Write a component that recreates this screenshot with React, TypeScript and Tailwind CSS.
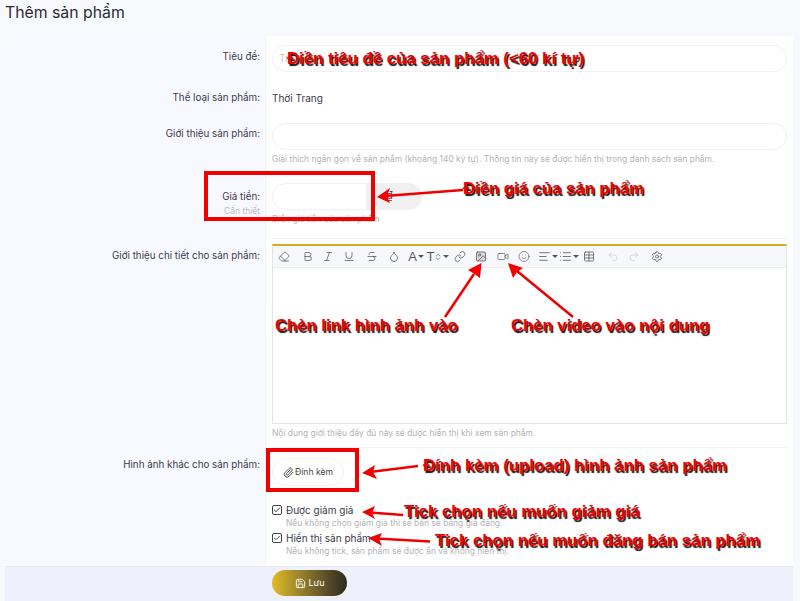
import React from "react";
import { Eraser, Bold, Italic, Underline, Strikethrough, Droplet, Link, Image, Video, Smile, AlignLeft, List, Table, Undo2, Redo2, Settings, Paperclip, Save, Check, ChevronsUpDown } from "lucide-react";

const Caret = () => <span className="ml-[1px] inline-block w-0 h-0 border-x-[3px] border-x-transparent border-t-[3px] border-t-[#555]" />;
const ic = { size: 13, strokeWidth: 1.5 };
const sans = { fontFamily: "'Liberation Sans', sans-serif" };

const tools: { c: number; n: React.ReactNode }[] = [
  { c: 284, n: <Eraser {...ic} /> },
  { c: 307.5, n: <Bold {...ic} /> },
  { c: 328, n: <Italic {...ic} /> },
  { c: 349, n: <Underline {...ic} /> },
  { c: 372, n: <Strikethrough {...ic} /> },
  { c: 394, n: <Droplet {...ic} /> },
  { c: 416, n: <span className="flex items-center text-[13px] leading-none text-[#555]" style={sans}>A<Caret /></span> },
  { c: 438, n: <span className="flex items-center text-[13px] leading-none text-[#555]" style={sans}>T<ChevronsUpDown size={8} /><Caret /></span> },
  { c: 460, n: <Link {...ic} /> },
  { c: 481, n: <Image size={13} strokeWidth={1.5} fill="#d5d5d5" /> },
  { c: 503, n: <Video size={15} strokeWidth={1.3} /> },
  { c: 524, n: <Smile size={13} strokeWidth={1.3} /> },
  { c: 548, n: <span className="flex items-center"><AlignLeft {...ic} /><Caret /></span> },
  { c: 569, n: <span className="flex items-center"><List {...ic} /><Caret /></span> },
  { c: 589, n: <Table {...ic} /> },
  { c: 613, n: <Undo2 size={13} strokeWidth={1.5} className="text-[#ccc]" /> },
  { c: 634, n: <Redo2 size={13} strokeWidth={1.5} className="text-[#ccc]" /> },
  { c: 657, n: <Settings {...ic} /> },
];

const Note = ({ className, children }: { className: string; children: React.ReactNode }) => (
  <div className={`absolute whitespace-nowrap font-bold text-[#f00000] [text-shadow:1.5px_1.5px_1px_#111] ${className}`} style={sans}>{children}</div>
);

const Label = ({ children, sub }: { children: React.ReactNode; sub?: string }) => (
  <div className="w-[261px] shrink-0 pr-[6px] text-right text-[9.8px] leading-[16px] text-[#3a3a4a]">
    {children}
    {sub && <div className="text-[8.5px] leading-[12px] text-[#bbbbbb]">{sub}</div>}
  </div>
);

const Check2 = () => (
  <span className="flex h-[10px] w-[10px] items-center justify-center rounded-[2px] border border-[#444]"><Check size={8} strokeWidth={3} className="text-[#444]" /></span>
);

const Row = ({ h, label, sub, children, top = 0 }: { h: number; label?: React.ReactNode; sub?: string; children: React.ReactNode; top?: number }) => (
  <div className="flex" style={{ height: h }}>
    <div style={{ paddingTop: top }}>
      <Label sub={sub}>{label}</Label>
    </div>
    <div className="flex-1 pl-[6px] pr-[6px]">{children}</div>
  </div>
);

const hint = "text-[8.45px] leading-[12px] text-[#b4b4b4] whitespace-nowrap";

export default function App() {
  return (
    <div className="relative h-[601px] w-[800px] overflow-hidden bg-[#f8f9fd] text-[#333]" style={{ fontFamily: "Inter, 'Noto Sans', sans-serif" }}>
      <h1 className="pl-[5px] pt-[2px] h-[36px] text-[15.8px] leading-[21px] text-[#2c2c36]">Thêm sản phẩm</h1>
      <div className="ml-[5px] w-[788px] h-[565px] flex flex-col bg-white rounded-t-[3px]">
        <div className="flex-1 relative">
          <div className="absolute inset-y-0 left-0 w-[261px] bg-[#f8f9fe] border-r border-[#f2f3f8]" />
          <div className="relative pt-[9px]">
            <Row h={43} label="Tiêu đề:" top={4}>
              <div className="h-[27px] rounded-full border border-[#f1f1f4] pl-[6px] text-[10px] leading-[25px] text-[#c8c8c8]">Tr</div>
            </Row>
            <Row h={35} label="Thể loại sản phẩm:" top={2}>
              <div className="pt-[2px] text-[10px] leading-[16px] text-[#3a3a4a]">Thời Trang</div>
            </Row>
            <Row h={60} label="Giới thiệu sản phẩm:" top={3}>
              <div className="h-[27px] rounded-full border border-[#f1f1f4]" />
              <div className={`mt-[3px] ${hint}`}>Giải thích ngắn gọn về sản phẩm (khoảng 140 ký tự). Thông tin này sẽ được hiển thị trong danh sách sản phẩm.</div>
            </Row>
            <Row h={62} label="Giá tiền:" sub="Cần thiết" top={6}>
              <div className="flex h-[27px] w-[150px]">
                <div className="w-[95px] rounded-l-full border border-[#f1f1f4]" />
                <div className="flex-1 rounded-r-full bg-[#f0f0f0] pr-[10px] text-center text-[10px] leading-[25px] text-[#444]">₫</div>
              </div>
              <div className={`mt-[3px] ${hint}`}>Điền giá tiền của sản phẩm</div>
              <div className="mt-[13px] h-px bg-[#f2f2f4]" />
            </Row>
            <Row h={207} label="Giới thiệu chi tiết cho sản phẩm:" top={3}>
              <div className="h-[180px] -mt-[1px] flex flex-col border border-[#e4e4e4] border-t-2 border-t-[#d9a926]">
                <div className="flex h-[21px] items-center bg-[#f7f8fb] text-[#555]">
                  {tools.map((t, i) => (
                    <span key={i} className="flex w-[12px] shrink-0 items-center justify-center" style={{ marginLeft: t.c - (i ? tools[i - 1].c : 273) - (i ? 12 : 6) }}>{t.n}</span>
                  ))}
                </div>
                <div className="flex-1 border-t border-[#eeeeee] bg-white" />
              </div>
              <div className={`mt-[3px] ${hint}`}>Nội dung giới thiệu đầy đủ này sẽ được hiển thị khi xem sản phẩm.</div>
              <div className="mt-[8px] h-px bg-[#f2f2f4]" />
            </Row>
            <Row h={50} label="Hình ảnh khác cho sản phẩm:" top={5}>
              <div className="mt-[6px] flex h-[28px] w-[72px] items-center justify-center gap-[1px] rounded-full border border-[#f1f1f4] text-[8.6px] text-[#444]"><Paperclip size={11} />Đính kèm</div>
            </Row>
            <Row h={28} label="" top={0}>
              <div className="flex items-center gap-[4px] pt-[1px] text-[10px] leading-[14px] text-[#3a3a4a]"><Check2 />Được giảm giá</div>
              <div className={`pl-[14px] ${hint} leading-[11px]`}>Nếu không chọn giảm giá thì sẽ bán sẽ bằng giá đăng.</div>
            </Row>
            <Row h={28} label="" top={0}>
              <div className="flex items-center gap-[4px] pt-[1px] text-[10px] leading-[14px] text-[#3a3a4a]"><Check2 />Hiển thị sản phẩm</div>
              <div className={`pl-[14px] ${hint} leading-[11px]`}>Nếu không tick, sản phẩm sẽ được ẩn và không hiển thị.</div>
            </Row>
          </div>
        </div>
        <div className="h-[35px] shrink-0 bg-[#eef1fc] border-t border-[#e6e8f2] pl-[267px] pt-[3px]">
          <div className="flex h-[26px] w-[75px] items-center justify-center gap-[3px] rounded-full bg-gradient-to-r from-[#e2bd22] to-[#2f2a1e] text-[9px] text-white"><Save size={11} />Lưu</div>
        </div>
      </div>

      <Note className="left-[287px] top-[49px] text-[16.8px] leading-[20px]">Điền tiêu đề của sản phẩm (&lt;60 kí tự)</Note>
      <Note className="left-[463px] top-[179px] text-[16.7px] leading-[20px]">Điền giá của sản phẩm</Note>
      <Note className="left-[275px] top-[316px] text-[16.7px] leading-[20px]">Chèn link hình ảnh vào</Note>
      <Note className="left-[511px] top-[316px] text-[16.7px] leading-[20px]">Chèn video vào nội dung</Note>
      <Note className="left-[423px] top-[456px] text-[16.8px] leading-[20px]">Đính kèm (upload) hình ảnh sản phẩm</Note>
      <Note className="left-[404px] top-[502px] text-[16.8px] leading-[20px]">Tick chọn nếu muốn giảm giá</Note>
      <Note className="left-[435px] top-[531px] text-[16.8px] leading-[20px]">Tick chọn nếu muốn đăng bán sản phẩm</Note>

      <div className="absolute left-[204px] top-[171px] h-[50px] w-[171px] border-[4px] border-[#f00000]" />
      <div className="absolute left-[266px] top-[448px] h-[44px] w-[93px] border-[4px] border-[#f00000]" />

      <svg className="absolute inset-0" width="800" height="601" viewBox="0 0 800 601">
        <g stroke="#f00000" strokeWidth="2.5" fill="none">
          <line x1="463" y1="190" x2="385" y2="196" />
          <line x1="418" y1="466" x2="370" y2="472" />
          <line x1="403" y1="515" x2="370" y2="512.5" />
          <line x1="430" y1="541.5" x2="376" y2="538.5" />
          <line x1="445" y1="317" x2="474" y2="274" />
          <line x1="573" y1="317" x2="517" y2="271" />
        </g>
        <g fill="#f00000">
          <polygon points="377,197 390,188 387,196 390,203" />
          <polygon points="362,473 375,465 373,472 377,479" />
          <polygon points="362,512 375,506 372,513 375,519" />
          <polygon points="368,538 382,533 379,539 382,546" />
          <polygon points="481.5,263 480,278 473,273 468,270" />
          <polygon points="508,263 523,268 517,272 513,278" />
        </g>
      </svg>
    </div>
  );
}
